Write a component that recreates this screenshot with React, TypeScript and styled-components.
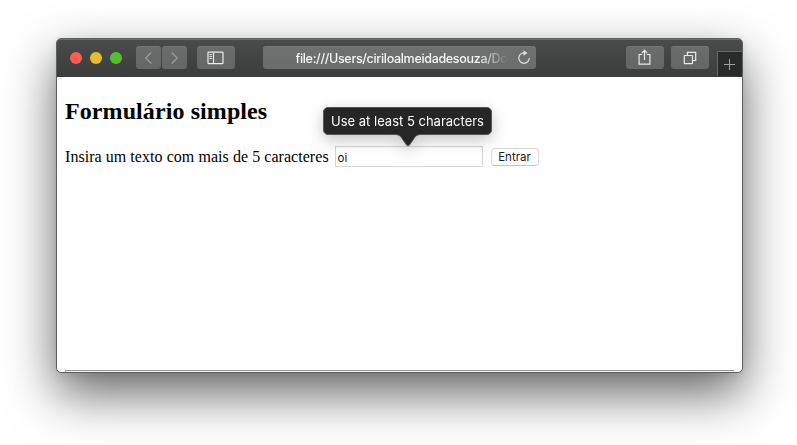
import React from "react";
import styled, { createGlobalStyle } from "styled-components";

const GlobalStyle = createGlobalStyle`
  * { box-sizing: border-box; }
  body { margin: 0; background: #fff; overflow: hidden; }
`;

const Desktop = styled.main`
  width: 797px;
  height: 445px;
  padding: 38px 54px 72px 56px;
  overflow: hidden;
`;

const Window = styled.section`
  display: flex;
  flex-direction: column;
  width: 687px;
  height: 335px;
  border: 1px solid #5f6160;
  border-radius: 5px;
  background: #fff;
  overflow: hidden;
  box-shadow: 0 21px 50px rgba(0, 0, 0, 0.6), 0 2px 10px rgba(0, 0, 0, 0.08);
`;

const Toolbar = styled.header`
  display: flex;
  align-items: flex-start;
  flex: none;
  height: 38px;
  padding: 7px 0 0 13px;
  background: linear-gradient(#4a4c4b, #3b3d3c);
  box-shadow: inset 0 1px #6b6d6c;
`;

const TrafficLights = styled.div`
  display: flex;
  gap: 8px;
  margin: 6px 13.5px 0 0;
`;

const Light = styled.span<{ $color: string }>`
  width: 12px;
  height: 12px;
  border-radius: 50%;
  background: ${(p) => p.$color};
`;

const ToolButton = styled.button<{ $width: number; $gap: number; $dim?: boolean }>`
  display: flex;
  align-items: center;
  justify-content: center;
  flex: none;
  width: ${(p) => p.$width}px;
  height: 23px;
  margin: 0 ${(p) => p.$gap}px 0 0;
  padding: 0;
  border: 0;
  border-radius: 3.5px;
  background: linear-gradient(#6b6d6c, #656766);
  box-shadow: inset 0 1px #757776;
  color: ${(p) => (p.$dim ? "#969897" : "#e9ebea")};
`;

const AddressBar = styled.div`
  display: flex;
  align-items: center;
  flex: none;
  width: 273.5px;
  height: 23px;
  margin-right: 90px;
  padding: 1px 5px 0 33px;
  border-radius: 3.5px;
  background: linear-gradient(#6f7170, #6b6d6c);
  box-shadow: inset 0 1px #777978;
  color: #f8f8f8;

  svg { margin-top: -2px; }
`;

const Address = styled.span`
  flex: none;
  width: 211px;
  margin-right: 10px;
  padding-top: 1px;
  white-space: nowrap;
  font: 500 12.5px/18px Inter, sans-serif;
  letter-spacing: -0.32px;
  mask-image: linear-gradient(to right, #000 182px, transparent 212px);
`;

const NewTab = styled.button`
  display: flex;
  align-items: center;
  justify-content: center;
  width: 25px;
  height: 25px;
  margin: 5px 0 0;
  padding: 0 2px 0 0;
  border: solid #666867;
  border-width: 1px 0 0 1px;
  background: #292b2a;
  color: #a0a2a1;
`;

const Page = styled.div`
  display: flex;
  flex-direction: column;
  flex: 1;
  padding: 20px 8px 0;
  color: #000;
  font-family: "Liberation Serif", serif;
`;

const Title = styled.h2`
  margin: 0 0 20px;
  font-size: 24px;
  line-height: 28px;
  letter-spacing: 0.09px;
`;

const Form = styled.form`
  display: flex;
  align-items: flex-start;
  height: 24px;
`;

const Label = styled.label`
  width: 269.5px;
  padding-top: 1px;
  white-space: nowrap;
  font-size: 16px;
  line-height: 22px;
  letter-spacing: 0.05px;
`;

const Field = styled.div`
  position: relative;
  width: 148px;
  margin: 1px 8px 0 0;
`;

const TextInput = styled.input`
  display: block;
  width: 148px;
  height: 21px;
  padding: 2px 2px 0;
  border: 1px solid #d6d6d6;
  border-radius: 0;
  outline: 0;
  color: #111;
  font: 11.5px/16px Inter, sans-serif;
`;

const Submit = styled.button`
  width: 48px;
  height: 18px;
  margin-top: 3px;
  padding: 1px 0 0;
  border: 1px solid #dadada;
  border-bottom-color: #c3c3c3;
  border-radius: 4px;
  background: #fff;
  color: #222;
  font: 11.5px/15px Inter, sans-serif;
`;

const Tooltip = styled.div`
  position: absolute;
  left: -11.5px;
  bottom: 32.5px;
  width: 169px;
  height: 28px;
  border: 1px solid #575757;
  border-radius: 5px;
  background: #262626;
  color: #fff;
  text-align: center;
  white-space: nowrap;
  font: 13px/27px Inter, sans-serif;
  filter: drop-shadow(0 5px 8px rgba(0, 0, 0, 0.23));
`;

const Tail = styled.svg`
  position: absolute;
  left: 71px;
  top: 25px;
`;

const Rule = styled.div`
  height: 2px;
  margin-top: auto;
  border-top: 1px solid #999;
  border-left: 1px solid #aaa;
  background: #ededed;
`;

const Chevron = ({ forward = false }: { forward?: boolean }) => (
  <svg width="9" height="14" viewBox="0 0 9 14" fill="none" stroke="currentColor" strokeWidth="1.4">
    <path d={forward ? "M1.7 1.5 7.3 7 1.7 12.5" : "M7.3 1.5 1.7 7 7.3 12.5"} />
  </svg>
);

const SidebarIcon = () => (
  <svg width="17" height="14" viewBox="0 0 17 14" fill="none" stroke="currentColor" strokeWidth="1.2">
    <rect x="1" y="1.2" width="15" height="11.5" rx=".6" />
    <path d="M6.5 1.2v11.5" />
    <path d="M2.4 3.5h2.5M2.4 5.5h2.5M2.4 7.5h2.5" strokeWidth=".9" />
  </svg>
);

const ReloadIcon = () => (
  <svg width="14" height="15" viewBox="0 0 14 15" fill="none" stroke="#e0e0e0" strokeWidth="1.2">
    <path d="M8 2.9H7a5.2 5.2 0 1 0 5.2 5.2" />
    <path d="m6.5.2 4 2.7-4 2.8z" fill="#e0e0e0" stroke="none" />
  </svg>
);

const ShareIcon = () => (
  <svg width="15" height="17" viewBox="0 0 15 17" fill="none" stroke="currentColor" strokeWidth="1.2">
    <path d="M5.2 5.5H2.1v9.7h10.8V5.5H9.8M7.5 11V1.5M4.9 4l2.6-2.6L10.1 4" />
  </svg>
);

const TabsIcon = () => (
  <svg width="14" height="14" viewBox="0 0 14 14" fill="none" stroke="currentColor" strokeWidth="1.2">
    <rect x="1.3" y="4.5" width="8.2" height="8.2" rx=".5" />
    <path d="M4.4 4.5V1.3h8.3v8.2H9.5" />
  </svg>
);

const PlusIcon = () => (
  <svg width="13" height="13" viewBox="0 0 13 13" fill="none" stroke="currentColor">
    <path d="M1 6.5h11M6.5 1v11" />
  </svg>
);

export default function App() {
  return (
    <>
      <GlobalStyle />
      <Desktop>
        <Window>
          <Toolbar>
            <TrafficLights>
              <Light $color="#ff5b51" />
              <Light $color="#e6bf2d" />
              <Light $color="#54c22e" />
            </TrafficLights>
            <ToolButton $width={25} $gap={1} $dim aria-label="Back"><Chevron /></ToolButton>
            <ToolButton $width={25} $gap={10.5} $dim aria-label="Forward"><Chevron forward /></ToolButton>
            <ToolButton $width={37.5} $gap={28} aria-label="Sidebar"><SidebarIcon /></ToolButton>
            <AddressBar>
              <Address>file:///Users/ciriloalmeidadesouza/Do</Address>
              <ReloadIcon />
            </AddressBar>
            <ToolButton $width={37.5} $gap={7.5} aria-label="Share"><ShareIcon /></ToolButton>
            <ToolButton $width={38} $gap={8} aria-label="Tabs"><TabsIcon /></ToolButton>
            <NewTab aria-label="New tab"><PlusIcon /></NewTab>
          </Toolbar>
          <Page>
            <Title>Formulário simples</Title>
            <Form onSubmit={(e) => e.preventDefault()}>
              <Label htmlFor="texto">Insira um texto com mais de 5 caracteres</Label>
              <Field>
                <TextInput id="texto" defaultValue="oi" />
                <Tooltip role="tooltip">
                  Use at least 5 characters
                  <Tail width="26" height="14" viewBox="0 0 26 14">
                    <path d="M0 1.5C5 1.5 6 4 8 7l3.5 5q1.5 2 3 0L18 7c2-3 3-5.5 8-5.5V0H0z" fill="#262626" />
                    <path d="M0 1.5C5 1.5 6 4 8 7l3.5 5q1.5 2 3 0L18 7c2-3 3-5.5 8-5.5" fill="none" stroke="#575757" />
                  </Tail>
                </Tooltip>
              </Field>
              <Submit type="submit">Entrar</Submit>
            </Form>
            <Rule />
          </Page>
        </Window>
      </Desktop>
    </>
  );
}
